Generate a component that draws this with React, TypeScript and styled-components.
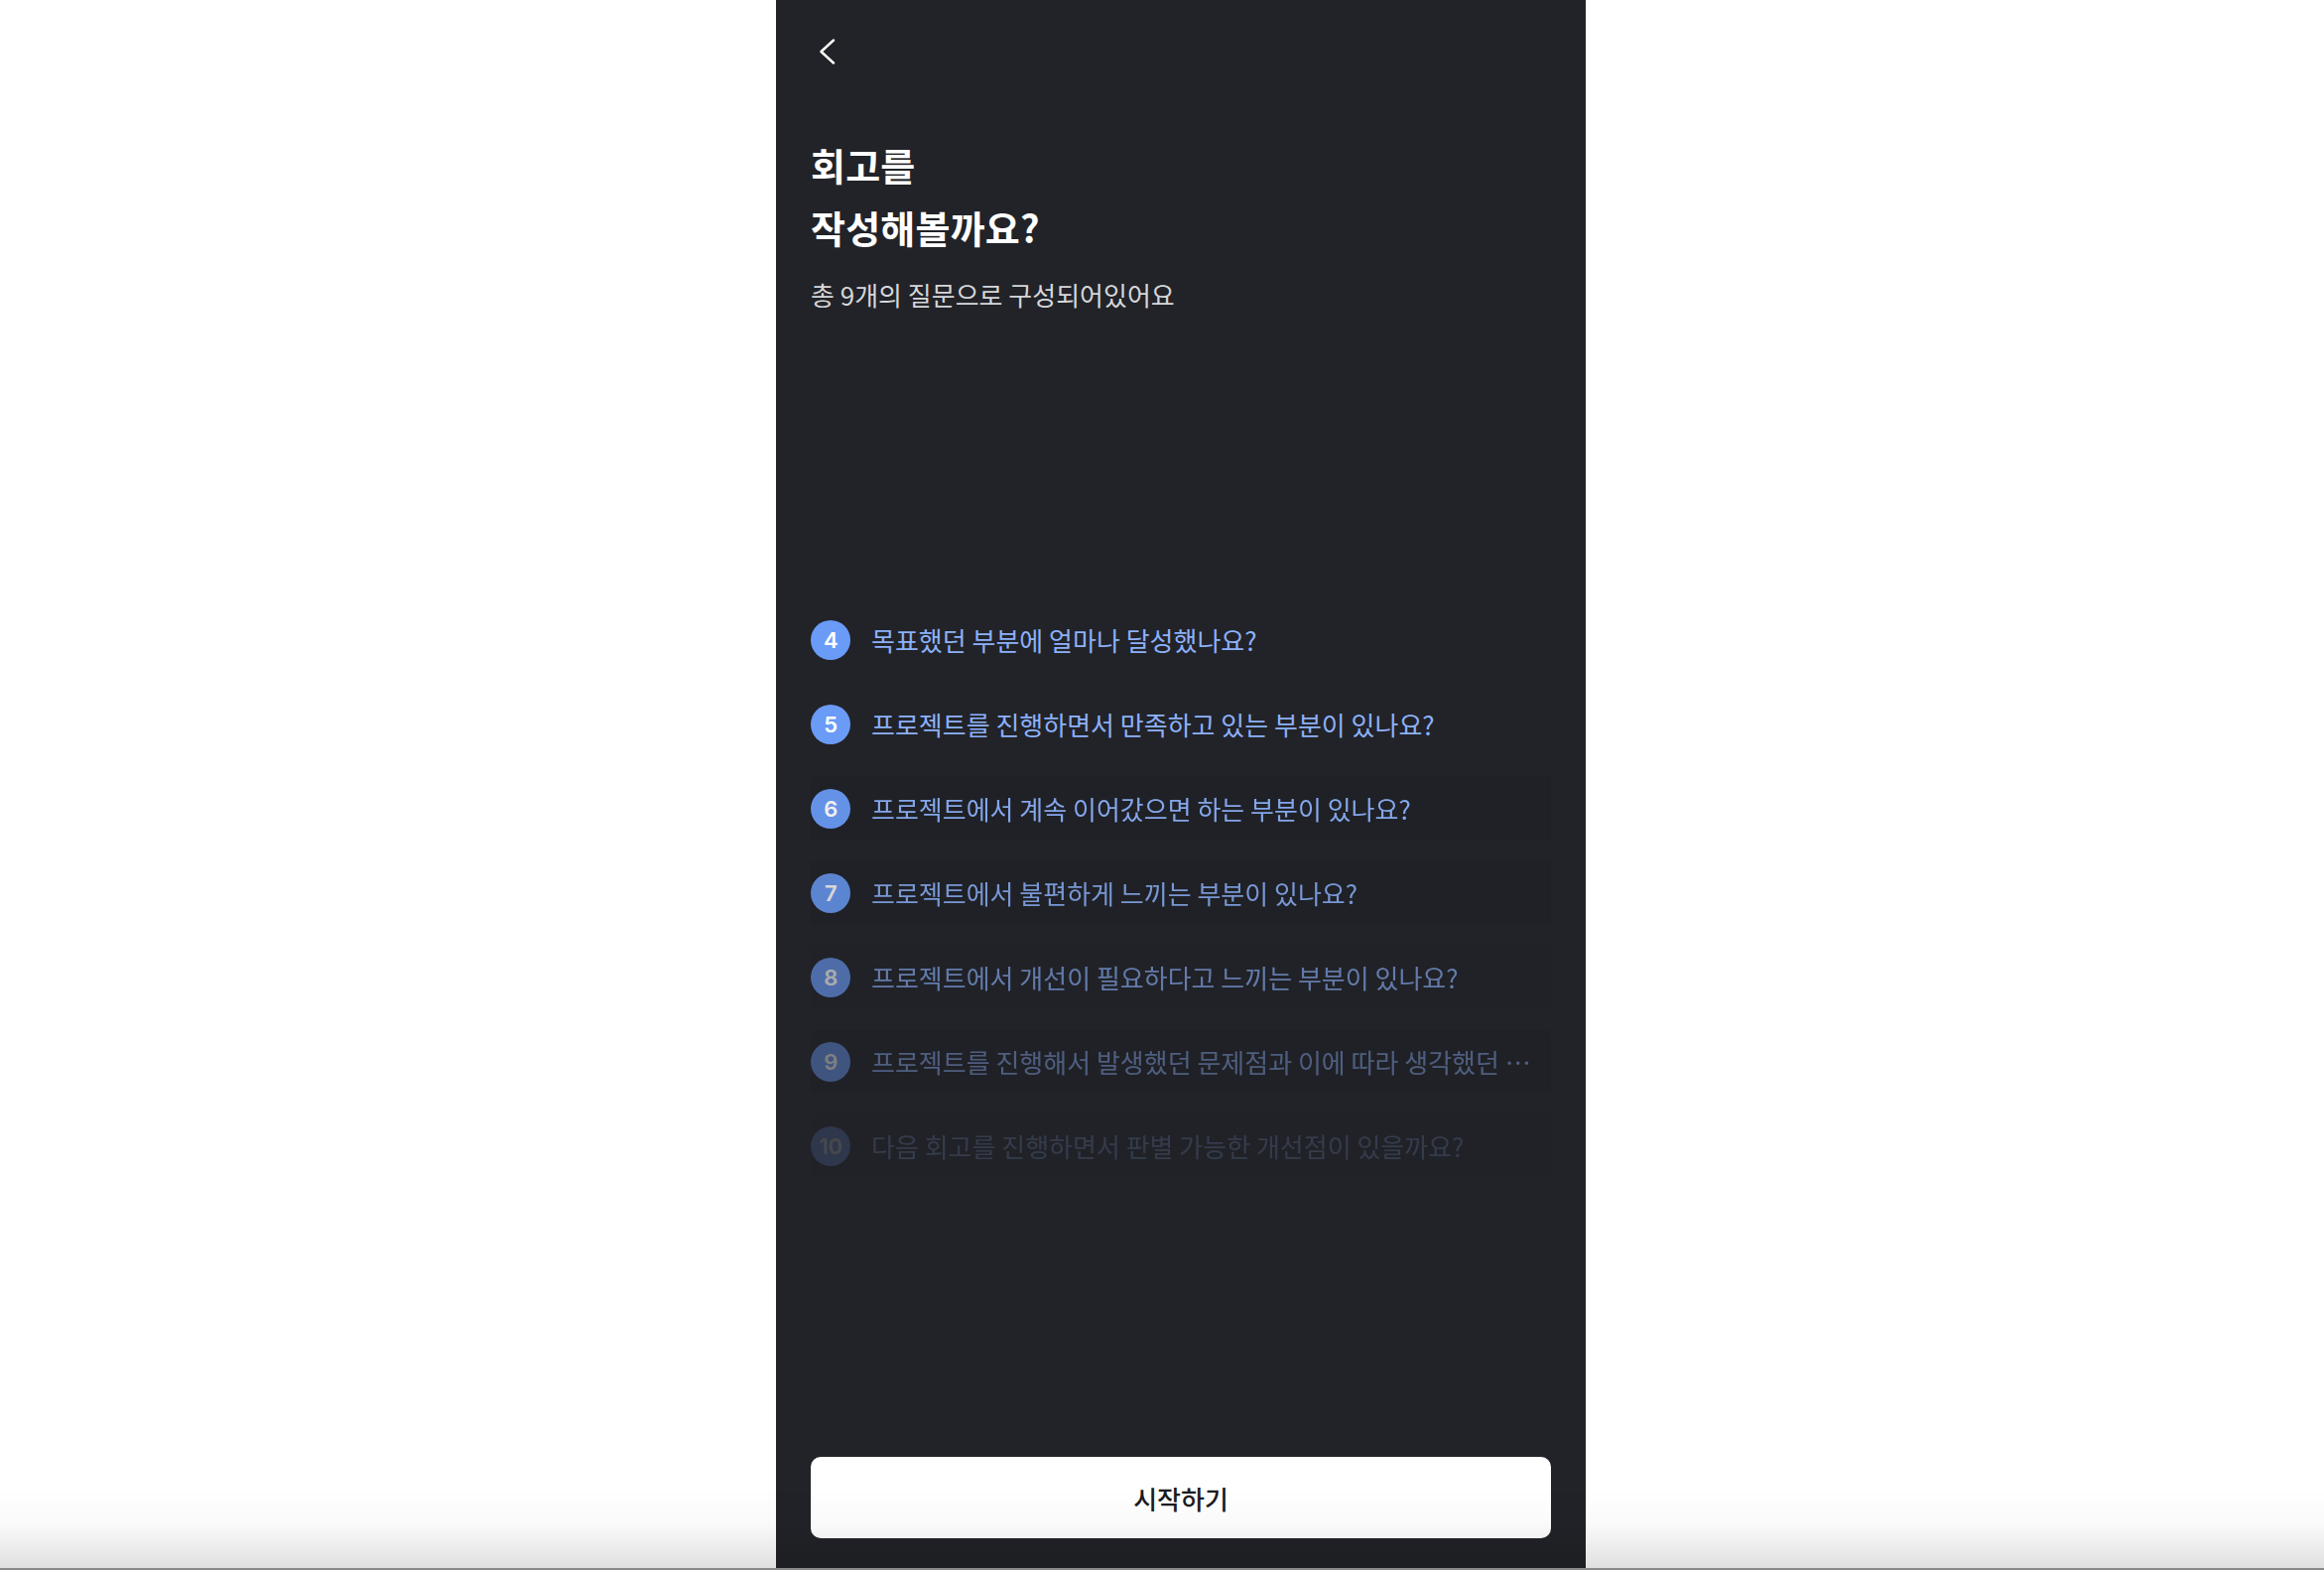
import styled, { createGlobalStyle } from "styled-components";

const GlobalStyle = createGlobalStyle`
    html, body {
        margin: 0;
        padding: 0;
        background: #ffffff;
    }
    body {
        font-family: "Noto Sans CJK KR", "Noto Sans", sans-serif;
    }
    * {
        box-sizing: border-box;
    }
`

const Page = styled.div`
    min-height: 100vh;
    display: flex;
    justify-content: center;
    padding-left: 38px;
`

const Panel = styled.main`
    width: 816px;
    min-height: 100vh;
    background: #222328;
    display: flex;
    flex-direction: column;
    padding: 0 35px 32px;
`

const Header = styled.header`
    height: 103px;
    display: flex;
    align-items: center;
    padding-left: 8px;
`

const BackButton = styled.button`
    background: none;
    border: none;
    padding: 0;
    display: flex;
    cursor: pointer;
`

const Title = styled.h1`
    margin: 31px 0 0;
    font-size: 38px;
    line-height: 63px;
    font-weight: 700;
    letter-spacing: 0.2px;
    color: #ffffff;
`

const Subtitle = styled.p`
    margin: 19px 0 0;
    font-size: 26px;
    line-height: 36px;
    color: #d6d7da;
`

const QuestionList = styled.ol`
    list-style: none;
    margin: 298px 0 0;
    padding: 0;
    display: flex;
    flex-direction: column;
    gap: 21px;
`

const QuestionRow = styled.li<{ $fade: number; $shaded: boolean }>`
    height: 64px;
    display: flex;
    align-items: center;
    gap: 21px;
    padding-right: 4px;
    border-radius: 4px;
    opacity: ${(p) => p.$fade};
    background: ${(p) => (p.$shaded ? "rgba(18, 20, 26, 0.08)" : "transparent")};
`

const NumberBadge = styled.span`
    flex: 0 0 40px;
    width: 40px;
    height: 40px;
    border-radius: 50%;
    background: #6a9bf7;
    color: #ffffff;
    display: flex;
    align-items: center;
    justify-content: center;
    font-family: Inter, "Noto Sans", sans-serif;
    font-size: 22px;
    font-weight: 600;
    letter-spacing: -0.5px;
`

const QuestionText = styled.span`
    flex: 1;
    min-width: 0;
    font-size: 26px;
    line-height: 36px;
    color: #8cb1fa;
    white-space: nowrap;
    overflow: hidden;
    text-overflow: ellipsis;
`

const StartButton = styled.button`
    margin-top: auto;
    height: 82px;
    width: 100%;
    border: none;
    border-radius: 10px;
    background: #ffffff;
    color: #1b1c20;
    font-family: "Noto Sans CJK KR", "Noto Sans", sans-serif;
    font-size: 26px;
    font-weight: 500;
    cursor: pointer;
`

const BottomShade = styled.div`
    position: fixed;
    left: 0;
    right: 0;
    bottom: 0;
    height: 82px;
    pointer-events: none;
    background: linear-gradient(to bottom, rgba(0, 0, 0, 0) 0%, rgba(0, 0, 0, 0.02) 45%, rgba(0, 0, 0, 0.12) 100%);
    border-bottom: 2px solid #8a8a8a;
`

const questions = [
    { n: 4, text: "목표했던 부분에 얼마나 달성했나요?" },
    { n: 5, text: "프로젝트를 진행하면서 만족하고 있는 부분이 있나요?" },
    { n: 6, text: "프로젝트에서 계속 이어갔으면 하는 부분이 있나요?" },
    { n: 7, text: "프로젝트에서 불편하게 느끼는 부분이 있나요?" },
    { n: 8, text: "프로젝트에서 개선이 필요하다고 느끼는 부분이 있나요?" },
    { n: 9, text: "프로젝트를 진행해서 발생했던 문제점과 이에 따라 생각했던 해결방법은 무엇인가요?" },
    { n: 10, text: "다음 회고를 진행하면서 판별 가능한 개선점이 있을까요?" },
]

const fades: Record<number, number> = { 4: 1, 5: 1, 6: 0.93, 7: 0.82, 8: 0.62, 9: 0.42, 10: 0.17 }

export default function App() {
    return (
        <>
            <GlobalStyle />
            <Page>
                <Panel>
                    <Header>
                        <BackButton aria-label="뒤로가기">
                            <svg width="17" height="26" viewBox="0 0 17 26" fill="none">
                                <polyline points="15,1.5 2.5,13 15,24.5" stroke="#ffffff" strokeWidth="2.4" strokeLinecap="round" strokeLinejoin="round" />
                            </svg>
                        </BackButton>
                    </Header>
                    <Title>
                        회고를
                        <br />
                        작성해볼까요?
                    </Title>
                    <Subtitle>총 9개의 질문으로 구성되어있어요</Subtitle>
                    <QuestionList>
                        {questions.map((q) => (
                            <QuestionRow key={q.n} $fade={fades[q.n]} $shaded={q.n >= 6}>
                                <NumberBadge>{q.n}</NumberBadge>
                                <QuestionText>{q.text}</QuestionText>
                            </QuestionRow>
                        ))}
                    </QuestionList>
                    <StartButton>시작하기</StartButton>
                </Panel>
            </Page>
            <BottomShade />
        </>
    )
}
